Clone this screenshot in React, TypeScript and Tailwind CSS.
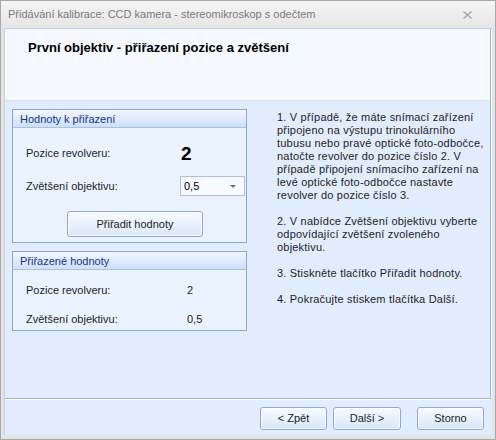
import { ReactNode } from 'react'

const font = "font-['Liberation_Sans',Arial,sans-serif]"

function GroupBox({ title, children, className }: { title: string; children: ReactNode; className?: string }) {
  return (
    <div className={`border border-[#8ba7d6] bg-[#eaf2fe] ${className ?? ''}`}>
      <div className="h-[18px] bg-gradient-to-b from-[#f3f7fe] to-[#cddff8] border-b border-[#a9c0e6] pl-[7px] text-[11px] leading-[18px] text-[#15368a]">
        {title}
      </div>
      {children}
    </div>
  )
}

function WizButton({ label, className }: { label: string; className?: string }) {
  return (
    <button
      className={`h-[23px] rounded-[3px] border border-[#8eaad4] bg-gradient-to-b from-[#f7faff] via-[#e9f1fc] to-[#d9e6f8] text-[11px] font-normal text-[#1e1e1e] shadow-[inset_0_0_0_1px_rgba(255,255,255,0.7)] ${className ?? ''}`}
    >
      {label}
    </button>
  )
}

export default function App() {
  return (
    <div className={`w-[496px] h-[440px] ${font} bg-[#e4e4e4] border border-[#a9a9a9] flex flex-col overflow-hidden`}>
      {/* Title bar */}
      <div className="h-[27px] shrink-0 flex items-center justify-between pl-[7px] pr-[23px] bg-gradient-to-b from-[#f4f4f4] to-[#e6e6e6]">
        <span className="text-[11px] text-[#7a7a7a]">Přidávání kalibrace: CCD kamera - stereomikroskop s odečtem</span>
        <svg width="9" height="8" viewBox="0 0 9 8" className="mt-[1px]">
          <path d="M0.5 0.5 L8.5 7.5 M8.5 0.5 L0.5 7.5" stroke="#a4a4a4" strokeWidth="1.3" />
        </svg>
      </div>

      {/* Client area */}
      <div className="flex-1 mx-[3px] mb-[4px] bg-[#e1ecfd] border-l border-t border-[#c4cfdf] flex flex-col">
        <div className="h-[370px] shrink-0 mr-[1px] border-r border-b border-[#9cb2d6] shadow-[1px_1px_0_#ffffff] flex flex-col">
          {/* Header */}
          <div className="h-[72px] shrink-0 bg-[#f5f9ff] border-b border-[#d6e2f4] pl-[23px] pt-[11px]">
            <div className="text-[13px] font-bold text-black leading-[16px]">První objektiv - přiřazení pozice a zvětšení</div>
          </div>

          {/* Body */}
          <div className="flex-1 flex pl-[7px] pt-[8px]">
            <div className="w-[235px] shrink-0 flex flex-col">
              <GroupBox title="Hodnoty k přiřazení" className="h-[134px]">
                <div className="flex flex-col text-[11px] text-[#1e1e1e]">
                  <div className="h-[24px] mt-[13px] flex items-center pl-[13px]">
                    <span className="w-[155px]">Pozice revolveru:</span>
                    <span className="text-[19px] font-bold text-black leading-none">2</span>
                  </div>
                  <div className="h-[20px] mt-[11px] flex items-center pl-[13px]">
                    <span className="w-[154px]">Zvětšení objektivu:</span>
                    <div className="w-[65px] h-[20px] border border-[#abc1e2] bg-[#f7faff] flex items-center justify-between pl-[3px] pr-[8px]">
                      <span className="text-black">0,5</span>
                      <svg width="6" height="3" viewBox="0 0 6 3">
                        <path d="M0 0 H6 L3 3 Z" fill="#5a6f92" />
                      </svg>
                    </div>
                  </div>
                  <div className="mt-[15px] pl-[54px]">
                    <WizButton label="Přiřadit hodnoty" className="w-[136px] h-[26px]" />
                  </div>
                </div>
              </GroupBox>

              <GroupBox title="Přiřazené hodnoty" className="h-[80px] mt-[8px]">
                <div className="flex flex-col text-[11px] text-[#1e1e1e]">
                  <div className="h-[18px] mt-[11px] flex items-center pl-[13px]">
                    <span className="w-[161px]">Pozice revolveru:</span>
                    <span>2</span>
                  </div>
                  <div className="h-[18px] mt-[11px] flex items-center pl-[13px]">
                    <span className="w-[161px]">Zvětšení objektivu:</span>
                    <span>0,5</span>
                  </div>
                </div>
              </GroupBox>
            </div>

            <div className="ml-[30px] pt-[2px] text-[11px] leading-[13px] tracking-[0.2px] text-[#1e1e1e] whitespace-nowrap flex flex-col gap-[13px]">
              <p>
                1. V případě, že máte snímací zařízení
                <br />
                připojeno na výstupu trinokulárního
                <br />
                tubusu nebo pravé optické foto-odbočce,
                <br />
                natočte revolver do pozice číslo 2. V
                <br />
                případě připojení snímacího zařízení na
                <br />
                levé optické foto-odbočce nastavte
                <br />
                revolver do pozice číslo 3.
              </p>
              <p>
                2. V nabídce Zvětšení objektivu vyberte
                <br />
                odpovídající zvětšení zvoleného
                <br />
                objektivu.
              </p>
              <p>3. Stiskněte tlačítko Přiřadit hodnoty.</p>
              <p>4. Pokračujte stiskem tlačítka Další.</p>
            </div>
          </div>
        </div>

        {/* Buttons */}
        <div className="flex-1 flex items-start justify-end pt-[8px] pr-[8px]">
          <WizButton label="< Zpět" className="w-[67px]" />
          <WizButton label="Další >" className="w-[68px] ml-[6px]" />
          <WizButton label="Storno" className="w-[67px] ml-[16px]" />
        </div>
      </div>
    </div>
  )
}
